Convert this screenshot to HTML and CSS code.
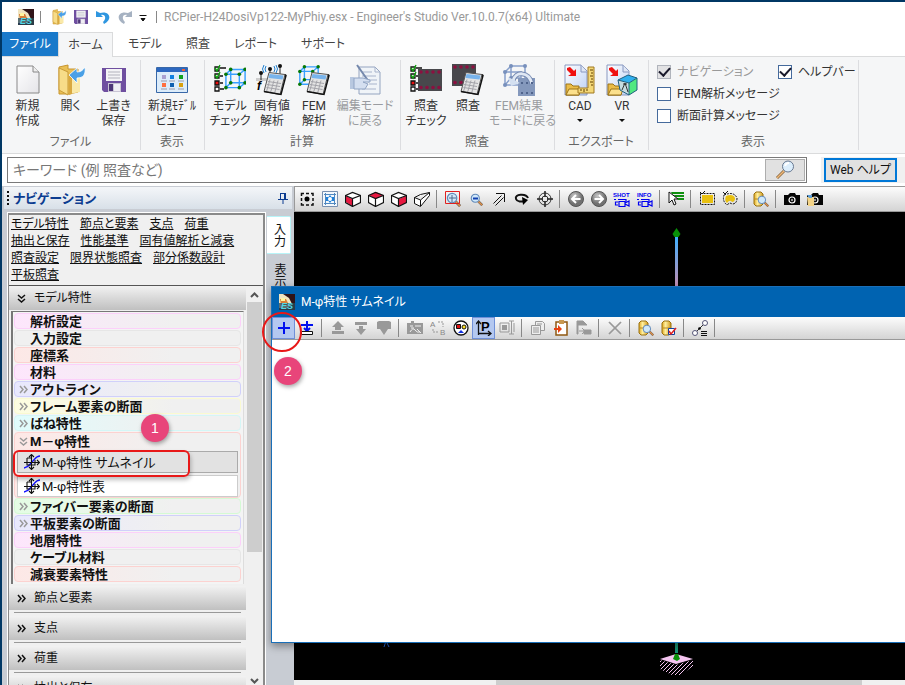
FILE: index.html
```html
<!DOCTYPE html>
<html lang="ja">
<head>
<meta charset="utf-8">
<title>Engineer's Studio</title>
<link rel="stylesheet" href="styles.css">
</head>
<body>
<svg class="defs" aria-hidden="true">
  <defs>
    <linearGradient id="gold" x1="0" x2="1"><stop offset="0" stop-color="#e0a820"/><stop offset=".4" stop-color="#fff0a0"/><stop offset="1" stop-color="#d09818"/></linearGradient>
    <linearGradient id="paper" x1="0" y1="0" x2="1" y2="1"><stop offset="0" stop-color="#fff"/><stop offset="1" stop-color="#e4e4e8"/></linearGradient>
    <linearGradient id="sheet" x1="0" y1="0" x2="1" y2="1"><stop offset="0" stop-color="#fff"/><stop offset="1" stop-color="#bcd0f4"/></linearGradient>
    <linearGradient id="beam" x1="0" y1="0" x2="0" y2="1"><stop offset="0" stop-color="#40b0ff"/><stop offset=".12" stop-color="#c48cb0"/><stop offset=".9" stop-color="#30a080"/><stop offset="1" stop-color="#109070"/></linearGradient>
    <radialGradient id="ball" cx=".4" cy=".3"><stop offset="0" stop-color="#c8c8c8"/><stop offset="1" stop-color="#707070"/></radialGradient>
    <pattern id="hatch" width="4" height="4" patternUnits="userSpaceOnUse"><path d="M0 4 4 0M-1 1 1-1M3 5 5 3" stroke="#f4c4f0" stroke-width="1"/></pattern>
  </defs>
  <symbol id="es" viewBox="0 0 16 16"><path fill="#301418" d="M0 0h16v16H0z"/><path fill="#f0e4c0" d="M0 0h4l6 4 3 6-4 4H0z"/><path fill="#d88038" d="M1 5h6l3 6H2z"/><path fill="#fff6a0" d="M2 4h4v3H2z"/><path fill="#284858" d="M0 9h16v7H0z" opacity=".75"/><text x="2" y="15" font-size="9" font-weight="700" font-style="italic" font-family="Liberation Sans" fill="#50d8e8">ES</text></symbol>
  <symbol id="open" viewBox="0 0 32 32"><path d="M4 3l9-2v4h10v23l-9 2H4z" fill="#eac055" stroke="#c89630"/><path d="M4 4l9 4v23l-9-5z" fill="#f7dc88" stroke="#c99b38"/><path d="M14 10h11v18l-11 2z" fill="#fae9a8"/><path d="M14 10h3v20l-3 1z" fill="#d9a940"/><path d="M14 11l8-7v4c4 0 6-2 8-5 1 8-2 11-8 11v5z" fill="#4aa0e6" stroke="#fff" stroke-width=".8"/></symbol>
  <symbol id="save" viewBox="0 0 24 24"><path d="M0 0h24v24H2l-2-2z" fill="#6f4fa0"/><path d="M4 1h16v12H4z" fill="#f4f4f6"/><path d="M6 4h12M6 7h12M6 10h12" stroke="#c8c8d0" stroke-width="1.5"/><path d="M6 15h13v9H6z" fill="#c9c4d4"/><path d="M7 16h4v7H7z" fill="#4e3778"/><path d="M12 16h6v7h-6z" fill="#f0eef4"/></symbol>
  <symbol id="cube" viewBox="0 0 24 24"><g fill="none" stroke="#38a0ff" stroke-width="1.5"><path d="M2 7h14v14H2zM7 2h15v14H7zM2 7l5-5M16 7l6-5M2 21l5-5M16 21l6-5"/></g><g fill="#067806"><circle cx="2" cy="7" r="1.900"/><circle cx="16" cy="7" r="1.900"/><circle cx="7" cy="2" r="1.900"/><circle cx="22" cy="2" r="1.900"/><circle cx="2" cy="21" r="1.900"/><circle cx="16" cy="21" r="1.900"/><circle cx="7" cy="16" r="1.900"/><circle cx="22" cy="16" r="1.900"/></g></symbol>
  <symbol id="calc" viewBox="0 0 24 24"><path d="M6 1l16 2-5 20-16-3z" fill="#e4e4e4" stroke="#555" stroke-width="1"/><path d="M6.500 2.500l14 1.500-1 4-14-1.500z" fill="#78b4ec"/><path d="M5 10l13 2M4 13l13 2M3.500 16l13 2M7 8L3.500 20M11 9L7.500 21M15 9l-3.500 13" stroke="#a4a4aa" stroke-width="1" fill="none"/><path d="M22 3l1 1-5 19-17-3" fill="none" stroke="#111" stroke-width="1.500"/></symbol>
  <symbol id="checks" viewBox="0 0 14 28"><g fill="#fff" stroke="#111" stroke-width="1.300"><path d="M1 3h4v4H1zM1 10h4v4H1zM1 23h4v4H1z" /><path fill="#e81010" d="M1 17h4v4H1z"/><path d="M6 4h6M6 12h3M6 19h3M6 25h4"/></g><path d="M1 4l2 3 3-6M1 11l2 3 3-6" fill="none" stroke="#10a010" stroke-width="1.400"/></symbol>
  <symbol id="slab" viewBox="0 0 24 22"><path d="M0 0h24v22H0z" fill="#48484c"/><g fill="#8c1040"><circle cx="3" cy="3" r="1.800"/><circle cx="9" cy="3" r="1.800"/><circle cx="15" cy="3" r="1.800"/><circle cx="21" cy="3" r="1.800"/><circle cx="3" cy="18.500" r="1.800"/><circle cx="9" cy="18.500" r="1.800"/><circle cx="15" cy="18.500" r="1.800"/><circle cx="21" cy="18.500" r="1.800"/></g></symbol>
  <symbol id="export" viewBox="0 0 32 32"><path d="M1 1h16l6 6v24H1z" fill="url(#sheet)" stroke="#8898c0"/><path d="M17 1v7h6" fill="#dfe6f4" stroke="#8898c0"/><path d="M3 4l3-1 4 4 2-2v7H4l3-2-4-4z" fill="#f01010"/><path d="M2 20h5l2 2h6v9H2z" fill="#eabc48" stroke="#9c7418"/><path d="M2 31l3-6h12l-2 6z" fill="#fbe08c" stroke="#9c7418"/></symbol>
  <symbol id="lens" viewBox="0 0 16 16"><path d="M10 10l5 5" stroke="#555" stroke-width="3"/><path d="M10 10l5 5" stroke="#e09048" stroke-width="1.800"/><circle cx="6.500" cy="6.500" r="5" fill="#cfe8fa" stroke="#6088b8" stroke-width="1.300"/></symbol>
  <symbol id="barrel" viewBox="0 0 16 16"><path d="M1 3l2-2h5l2 2v10l-2 2H3l-2-2z" fill="url(#gold)" stroke="#987010"/><path d="M2 8h7" stroke="#b88820"/></symbol>
  <symbol id="box" viewBox="0 0 16 16"><path d="M1 4l6-3 8 3v8l-7 3-7-3z" fill="#fff"/></symbol>
  <symbol id="edges" viewBox="0 0 16 16"><path d="M.5 4.500l7-3 8 3v7l-8 4-7-4zM.5 4.500l7 3 8-3M7.500 7.500v8" fill="none" stroke="#111" stroke-width="1.200"/></symbol>
  <symbol id="camera" viewBox="0 0 16 16"><path d="M0 4h4l2-2h5l1 2h4v10H0z" fill="#050505"/><circle cx="8" cy="9" r="3" fill="none" stroke="#fff" stroke-width="1.200"/><circle cx="8" cy="9" r="1.200" fill="#999"/></symbol>
  <symbol id="video" viewBox="0 0 18 18"><path d="M1 9.500h2M5 9.500h8v2M6 11.500h6v5H6zM5 12H2.500v3H5M12 13l4-2v5l-4-2" fill="none" stroke="#0000f0" stroke-width="1.200"/></symbol>
  <symbol id="phi" viewBox="0 0 16 16"><path d="M0 14c5-1 5-3 8-6s4-6 8-6" stroke="#1010ff" stroke-width="1.400" fill="none"/><path d="M0 8.500h15M7.500 1v14M5 3l2.500-2.500L10 3M5 13l2.500 2.500L10 13M13 6l2.500 2.500L13 11M3 4h5M3 4v7h5M11 6v5H8" stroke="#111" fill="none" stroke-width="1.100"/></symbol>
  <symbol id="more" viewBox="0 0 9 9"><path d="M1 1l3 3.500L1 8M5 1l3 3.500L5 8" fill="none" stroke="currentColor" stroke-width="1.500"/></symbol>
  <symbol id="less" viewBox="0 0 9 9"><path d="M1 1l3.500 3L8 1M1 5l3.500 3L8 5" fill="none" stroke="currentColor" stroke-width="1.500"/></symbol>
</svg>

<div class="app">
  <header class="titlebar">
    <svg class="i16"><use href="#es"/></svg>
    <span class="bar"></span>
    <button class="quick" aria-label="開く"><svg class="i16"><use href="#open"/></svg></button>
    <button class="quick" aria-label="保存"><svg class="i14"><use href="#save"/></svg></button>
    <button class="quick" aria-label="元に戻す"><svg class="i14" viewBox="0 0 14 14"><path d="M0 1v6h7L5 5c4-1 6 3 2 7l1 2c9-4 6-14-4-11z" fill="#2f96e0"/></svg></button>
    <button class="quick" aria-label="やり直し"><svg class="i14" viewBox="0 0 14 14"><path d="M14 1v6H7l2-2C5 4 3 8 7 12l-1 2C-3 10 0 0 10 3z" fill="#a6b2c2"/></svg></button>
    <button class="quick quick--menu" aria-label="カスタマイズ"><svg class="i10" viewBox="0 0 10 10"><path d="M1.500 3.500h7M3 6.500h4L5 9z" fill="#111" stroke="#111" /></svg></button>
    <span class="bar"></span>
    <h1>RCPier-H24DosiVp122-MyPhiy.esx - Engineer's Studio Ver.10.0.7(x64) Ultimate</h1>
  </header>

  <nav class="tabs">
    <button class="tab tab--file">ファイル</button>
    <button class="tab tab--on">ホーム</button>
    <button class="tab">モデル</button>
    <button class="tab">照査</button>
    <button class="tab">レポート</button>
    <button class="tab">サポート</button>
  </nav>

  <section class="ribbon">
    <div class="group group--file">
      <div class="tools">
        <button class="tool"><svg class="i32" viewBox="0 0 32 32"><path d="M5 2h16l6 6v21H5z" fill="url(#paper)" stroke="#888"/><path d="M21 2v6h6" fill="#eee" stroke="#888"/></svg>新規<br>作成</button>
        <button class="tool"><svg class="i32"><use href="#open"/></svg>開く</button>
        <button class="tool"><svg class="i32" viewBox="0 0 32 32"><use href="#save" x="4" y="4" width="24" height="24"/></svg>上書き<br>保存</button>
      </div>
      <div class="caption">ファイル</div>
    </div>
    <div class="group">
      <div class="tools">
        <button class="tool tool--mid"><svg class="i32" viewBox="0 0 32 32"><path d="M.5 3.500h31v25H.5z" fill="#dcecfa" stroke="#3868a8"/><path d="M1 4h30v4H1z" fill="#2c68c0"/><path d="M26 5h3v2h-3z" fill="#f06030"/><path d="M6 11h4v4H6z" fill="#a8a0d0"/><path d="M14 11h4v4h-4z" fill="#1080e0"/><path d="M23 11h4v4h-4z" fill="#10a020"/><path d="M6 19h4v4H6z" fill="#ff7040"/><path d="M14 19h4v4h-4z" fill="#1060b0"/><path d="M23 19h4v4h-4z" fill="#d8a010"/><path d="M5 17h6M13 17h6M22 17h6M5 25h6M13 25h6M22 25h6" stroke="#99a"/></svg>新規ﾓﾃﾞﾙ<br>ビュー</button>
      </div>
      <div class="caption">表示</div>
    </div>
    <div class="group">
      <div class="tools">
        <button class="tool"><svg class="i32" viewBox="0 0 32 32"><use href="#checks" y="0" width="14" height="28"/><use href="#cube" x="10" y="3" width="23" height="24"/></svg>モデル<br>チェック</button>
        <button class="tool"><svg class="i32" viewBox="0 0 32 32"><path d="M0 14h14v3H0z" fill="#ccc"/><path d="M5 10v6M14 6v9M24 3v8" stroke="#222"/><g fill="#111"><circle cx="5" cy="9" r="2"/><circle cx="14" cy="5" r="2"/><circle cx="24" cy="2" r="2"/></g><path d="M10 2q-2 3 0 6M8 1q-3 4 0 8M18 2q2 3 0 6M20 1q3 4 0 8" stroke="#2080d0" fill="none"/><use href="#calc" x="7" y="7" width="24" height="25"/><text x="1" y="26" font-size="12" font-style="italic" font-weight="700" font-family="Liberation Sans">f</text></svg>固有値<br>解析</button>
        <button class="tool"><svg class="i32" viewBox="0 0 32 32"><use href="#cube" x="0" y="0" width="22" height="24"/><use href="#calc" x="8" y="7" width="24" height="25"/></svg>FEM<br>解析</button>
        <button class="tool tool--wide" disabled><svg class="i32" viewBox="0 0 32 32"><path d="M10 3h16l5 5v22H10z" fill="#f0f4f8" stroke="#94a4c0"/><path d="M13 8h10M13 12h14M18 16h10M20 20h8M13 25h14M26 3v5h5" stroke="#a8b4cc" fill="none"/><path d="M8 1l12 17" stroke="#7488ac" stroke-width="2"/><path d="M1 13h4v12H1z" fill="#b8c8e0"/><path d="M5 14h9l7 2v2h-7l5 2-3 5H5z" fill="#d4dff0" stroke="#90a4c4"/></svg>編集モード<br>に戻る</button>
      </div>
      <div class="caption">計算</div>
    </div>
    <div class="group">
      <div class="tools">
        <button class="tool"><svg class="i32" viewBox="0 0 32 32"><use href="#checks" width="14" height="28"/><use href="#slab" x="8" y="5" width="24" height="22"/></svg>照査<br>チェック</button>
        <button class="tool"><svg class="i32" viewBox="0 0 32 32"><use href="#slab" width="24" height="22"/><use href="#calc" x="8" y="7" width="24" height="25"/></svg>照査</button>
        <button class="tool tool--wide" disabled><svg class="i32" viewBox="0 0 32 32"><path d="M2 8h16v13H2zM8 2h14v13M2 8l6-6v12M2 21l6-7h10" fill="none" stroke="#88a0cc" stroke-width="1.500"/><g fill="#7890bc"><circle cx="2" cy="8" r="2"/><circle cx="8" cy="2" r="2"/><circle cx="22" cy="2" r="2"/><circle cx="2" cy="21" r="2"/><circle cx="8" cy="14" r="2"/></g><path d="M15 14h17v18H15z" fill="#8498bc"/><path d="M10 17c2-10 16-10 19 3" fill="none" stroke="#7488b0" stroke-width="5"/><path d="M10 17c2-10 16-10 19 3" fill="none" stroke="#e0e8f4" stroke-width="3"/><path d="M5 13l3 9 9-3z" fill="#d4e0f0"/><path d="M18 19h2M23 19h2M28 19h2M18 29h2M23 29h2M28 29h2" stroke="#50648c" stroke-width="2"/></svg>FEM結果<br>モードに戻る</button>
      </div>
      <div class="caption">照査</div>
    </div>
    <div class="group">
      <div class="tools">
        <button class="tool"><svg class="i32" viewBox="0 0 32 32"><use href="#export" width="32" height="32"/><path d="M24 3h6v26H14v-5h10z" fill="#f4d878" stroke="#a07820"/><path d="M26 6h3M27 9h2M26 12h3M27 15h2M26 18h3M27 21h2M17 25v2M20 25v3M23 25v2" stroke="#604000"/></svg>CAD<span class="caret"></span></button>
        <button class="tool"><svg class="i32" viewBox="0 0 32 32"><use href="#export" width="32" height="32"/><path d="M12 16l10-5 9 3-8 5z" fill="#30b0f0"/><path d="M12 16l11 3v12l-9-5z" fill="#c8dce0"/><path d="M23 19l8-5v12l-8 5z" fill="#50e880"/><path d="M12 16l10-5 9 3v12l-8 5-9-5zM12 16l11 3v12M23 19l8-5" fill="none" stroke="#206080"/><path d="M16 26l3-7 3 9M17 20h4" stroke="#333" fill="none"/></svg>VR<span class="caret"></span></button>
      </div>
      <div class="caption">エクスポート</div>
    </div>
    <div class="group group--checks">
      <div class="checks">
        <label class="check check--off"><input type="checkbox" checked disabled>ナビゲーション</label>
        <label class="check"><input type="checkbox" checked>ヘルプバー</label>
        <label class="check"><input type="checkbox">FEM解析メッセージ</label>
        <span></span>
        <label class="check"><input type="checkbox">断面計算メッセージ</label>
      </div>
      <div class="caption">表示</div>
    </div>
  </section>

  <form class="search">
    <div class="search-box">
      <input type="text" aria-label="キーワード" placeholder="キーワード (例 照査など)">
      <button type="button" class="search-go" aria-label="検索"><svg class="i20" viewBox="0 0 20 20"><path d="M9 11l-7 7" stroke="#8a6840" stroke-width="3"/><path d="M9 11l-7 7" stroke="#f0b878" stroke-width="1.500"/><circle cx="13" cy="6.500" r="5.500" fill="#dceefc" stroke="#687890"/><path d="M10 6q1-3 4-3" stroke="#fff" stroke-width="2" fill="none"/></svg></button>
    </div>
    <div class="help"><button type="button">Web ヘルプ</button></div>
  </form>

  <main class="work">
    <aside class="nav">
      <div class="nav-head">
        <span class="grip"></span>
        <h2>ナビゲーション</h2>
        <svg class="pin" viewBox="0 0 10 12"><path d="M2.500 1v6M7.500 1v6M2 1.500h6M6.500 1v6M0 7.500h10M5 8v4" fill="none" stroke="#0c3c90"/></svg>
      </div>
      <div class="nav-body">
        <div class="panel">
          <div class="links">
            <div><a href="#">モデル特性</a><a href="#">節点と要素</a><a href="#">支点</a><a href="#">荷重</a></div>
            <div><a href="#">抽出と保存</a><a href="#">性能基準</a><a href="#">固有値解析と減衰</a></div>
            <div><a href="#">照査設定</a><a href="#">限界状態照査</a><a href="#">部分係数設計</a></div>
            <div><a href="#">平板照査</a></div>
          </div>
          <div class="scroller">
            <div class="sections">
              <button class="section"><svg class="i9"><use href="#less"/></svg>モデル特性</button>
              <ul class="tree">
                <li class="item pink"><span class="mark"></span>解析設定</li>
                <li class="item grey"><span class="mark"></span>入力設定</li>
                <li class="item red"><span class="mark"></span>座標系</li>
                <li class="item pink"><span class="mark"></span>材料</li>
                <li class="item blue"><svg class="mark"><use href="#more"/></svg>アウトライン</li>
                <li class="item yellow"><svg class="mark"><use href="#more"/></svg>フレーム要素の断面</li>
                <li class="item cyan"><svg class="mark"><use href="#more"/></svg>ばね特性<span class="badge badge--one">1</span></li>
                <li class="branch red">
                  <div class="item item--plain"><svg class="mark"><use href="#less"/></svg>M－φ特性</div>
                  <button class="leaf leaf--on"><svg class="i16"><use href="#phi"/></svg>M-φ特性 サムネイル<span class="outline"></span></button>
                  <button class="leaf"><svg class="i16"><use href="#phi"/></svg>M-φ特性表</button>
                </li>
                <li class="item green"><svg class="mark"><use href="#more"/></svg>ファイバー要素の断面</li>
                <li class="item blue"><svg class="mark"><use href="#more"/></svg>平板要素の断面</li>
                <li class="item pink"><span class="mark"></span>地層特性</li>
                <li class="item grey"><span class="mark"></span>ケーブル材料</li>
                <li class="item red"><span class="mark"></span>減衰要素特性</li>
              </ul>
              <button class="section section--more"><svg class="i9"><use href="#more"/></svg>節点と要素</button>
              <button class="section section--more"><svg class="i9"><use href="#more"/></svg>支点</button>
              <button class="section section--more"><svg class="i9"><use href="#more"/></svg>荷重</button>
              <button class="section section--more"><svg class="i9"><use href="#more"/></svg>抽出と保存</button>
            </div>
            <div class="track">
              <svg class="i9" viewBox="0 0 9 9"><path d="M1 6l3.500-3.500L8 6" fill="none" stroke="#555" stroke-width="2"/></svg>
              <span class="thumb"></span>
              <svg class="i9" viewBox="0 0 9 9"><path d="M1 3l3.500 3.500L8 3" fill="none" stroke="#555" stroke-width="2"/></svg>
            </div>
          </div>
        </div>
        <div class="sides">
          <button class="side side--on">入力</button>
          <button class="side">表示</button>
        </div>
      </div>
    </aside>

    <section class="model">
      <div class="toolbar">
        <button aria-label="中心"><svg class="i16" viewBox="0 0 16 16"><path d="M2.500 5V2.500H5M7 2.500h3M12 2.500h2V5M2.500 7v3M14 7v3M2.500 12v2H5M7 14h3M12 14h2v-2" fill="none" stroke="#111" stroke-width="1.500"/><circle cx="8" cy="8" r="2.500"/></svg></button>
        <button aria-label="全体表示"><svg class="i16" viewBox="0 0 16 16"><path d="M.5.5h15v15H.5z" fill="#f4f8fc" stroke="#7890b0"/><path d="M3.500 2v12M12.500 2v12M2 3.500h12M2 12.500h12" stroke="#5088c0"/><path d="M8 4l1.500 2H12v4h-2.500L8 12l-1.500-2H4V6h2.500z" fill="#2080d8"/><circle cx="8" cy="8" r="2" fill="#fff"/></svg></button>
        <button aria-label="前面"><svg class="i16"><use href="#box"/><path d="M1 5l6 3v7l-6-4z" fill="#e81840"/><use href="#edges"/></svg></button>
        <button aria-label="上面"><svg class="i16"><use href="#box"/><path d="M1 4l7-3 7 3-7 4z" fill="#e81840"/><use href="#edges"/></svg></button>
        <button aria-label="側面"><svg class="i16"><use href="#box"/><path d="M8 8l7-3v7l-7 3z" fill="#e81840"/><use href="#edges"/></svg></button>
        <button aria-label="斜め"><svg class="i16" viewBox="0 0 16 16"><path d="M.5 6.500l6-3 9-2v3l-9 11-6-3zM.5 6.500l6 2.500 9-7.500M6.500 9v6" fill="#fff" stroke="#111"/></svg></button>
        <span class="sep"></span>
        <button aria-label="範囲拡大"><svg class="i16" viewBox="0 0 16 16"><use href="#lens" x="1" y="1" width="15" height="15"/><path d="M4 7h7M7 4v7" stroke="#506888"/><path d="M.5.500h14v12H.5z" fill="none" stroke="#e02020"/></svg></button>
        <button aria-label="縮小"><svg class="i16" viewBox="0 0 16 16"><use href="#lens" x="2" y="2" width="13" height="13"/><path d="M5 7.500h5" stroke="#1040b0" stroke-width="2"/></svg></button>
        <button aria-label="移動"><svg class="i16" viewBox="0 0 16 16"><path d="M2.500 12.500l8-8M4.500 14.500l8-8M5 2.500h8.500V11" fill="none" stroke="#111" stroke-width="1"/></svg></button>
        <button aria-label="回転"><svg class="i16" viewBox="0 0 16 16"><path d="M14 7C12 2 0 3 2 8c1 3 6 3 8 2" fill="none" stroke="#111" stroke-width="2"/><path d="M8 6l6 3-5 5z"/></svg></button>
        <button aria-label="注視点"><svg class="i16" viewBox="0 0 16 16"><circle cx="8" cy="8" r="6" fill="none" stroke="#333"/><circle cx="8" cy="8" r="3" fill="none" stroke="#333"/><path d="M8 0v6M8 10v6M0 8h6M10 8h6" stroke="#222" stroke-width="1.500"/></svg></button>
        <span class="sep"></span>
        <button aria-label="戻る"><svg class="i16" viewBox="0 0 16 16"><circle cx="8" cy="8" r="7.500" fill="url(#ball)" stroke="#555"/><path d="M12.500 8H4M8 4L4 8l4 4" stroke="#fff" stroke-width="2" fill="none"/></svg></button>
        <button aria-label="進む"><svg class="i16" viewBox="0 0 16 16"><circle cx="8" cy="8" r="7.500" fill="url(#ball)" stroke="#555"/><path d="M3.500 8H12M8 4l4 4-4 4" stroke="#fff" stroke-width="2" fill="none"/></svg></button>
        <button aria-label="撮影"><svg class="i18" viewBox="0 0 18 18"><text x="0" y="7" font-size="6" font-weight="700" font-family="Liberation Sans" fill="#0000f0">SHOT</text><use href="#video"/></svg></button>
        <button aria-label="情報"><svg class="i18" viewBox="0 0 18 18"><text x="1" y="7" font-size="6" font-weight="700" font-family="Liberation Sans" fill="#0000f0">INFO</text><use href="#video"/></svg></button>
        <span class="sep"></span>
        <button aria-label="選択"><svg class="i16" viewBox="0 0 16 16"><path d="M3 1h13v2H4zM6 4h10v2H7zM9 7h7v2h-6z" fill="#109010"/><path d="M1 1v11l3-3 2 5 2-1-2-5h4z" fill="#fff" stroke="#111"/></svg></button>
        <span class="sep"></span>
        <button aria-label="矩形選択"><svg class="i16" viewBox="0 0 16 16"><path d="M3 4h11v8H3z" fill="#e8c010"/><path d="M1.500 2.500h14v11h-14z" fill="none" stroke="#111" stroke-dasharray="2 1"/><path d="M1 1l2 2 3-3" stroke="#111" fill="none"/></svg></button>
        <button aria-label="自由選択"><svg class="i16" viewBox="0 0 16 16"><path d="M4 5q7-3 9 2 0 4-3 4-2-3-5 1-3-2-1-7z" fill="#e8c010"/><path d="M2 4q10-4 13 3 0 6-5 6-2-2-5 1-5-4-3-10z" fill="none" stroke="#111" stroke-dasharray="2 1"/><path d="M1 1l2 2 3-3" stroke="#111" fill="none"/></svg></button>
        <span class="sep"></span>
        <button aria-label="検索"><svg class="i16" viewBox="0 0 16 16"><use href="#barrel"/><use href="#lens" x="4" y="4" width="12" height="12"/></svg></button>
        <span class="sep"></span>
        <button aria-label="カメラ"><svg class="i16"><use href="#camera"/></svg></button>
        <button aria-label="画像コピー"><svg class="i16" viewBox="0 0 16 16"><use href="#camera"/><path d="M0 6h7v9H1z" fill="#f4d488"/><path d="M0 4h5v3H2z" fill="#60a0d8"/></svg></button>
      </div>
      <svg class="canvas" viewBox="0 0 611 469" preserveAspectRatio="xMinYMin slice"><path d="M381 25h3v416h-3z" fill="url(#beam)"/><path d="M382.500 16l4 6-2 3h-4l-2-3z" fill="#089008"/><path d="M366 447l16-5 17 5-17 5z" fill="#f4c4f0"/><path d="M366 448l16 5 17-5v6l-12 9h-9l-12-6z" fill="url(#hatch)"/><path d="M379 447l2-5h3l2 5-3 2z" fill="#089008"/><path d="M90 435l2-6 3 6" stroke="#2060d0" fill="none"/></svg>
      <div class="hscroll"><span></span></div>
    </section>
  </main>

  <section class="dialog" role="dialog" aria-label="M-φ特性 サムネイル">
    <header><svg class="i16"><use href="#es"/></svg><h2>M-φ特性 サムネイル</h2></header>
    <div class="toolbar toolbar--dialog">
      <button class="on" aria-label="追加"><svg class="i16" viewBox="0 0 16 16"><path d="M8 2v12M2 8h12" stroke="#0010f0" stroke-width="2"/></svg><span class="ring"></span><span class="badge badge--two">2</span></button>
      <button aria-label="挿入"><svg class="i16" viewBox="0 0 16 16"><path d="M8 1v9M2 5h12M5 8l3 3 3-3" stroke="#0010f0" stroke-width="2" fill="none"/><path d="M2.500 11.500h11v3h-11z" stroke="#111" fill="#fff"/></svg></button>
      <span class="sep"></span>
      <button disabled aria-label="上へ"><svg class="i16" viewBox="0 0 16 16"><path d="M8 1l6 6h-3v3H5V7H2zM2 11h12v3H2z" fill="#999"/></svg></button>
      <button disabled aria-label="下へ"><svg class="i16" viewBox="0 0 16 16"><path d="M2 2h12v3H2zM6 6h4v3h3l-5 6-5-6h3z" fill="#999"/></svg></button>
      <button disabled aria-label="最下部へ"><svg class="i16" viewBox="0 0 16 16"><path d="M1 2l2-1h10l2 1v7h-3l-4 6-4-6H1z" fill="#999"/></svg></button>
      <span class="sep"></span>
      <button disabled aria-label="編集"><svg class="i16" viewBox="0 0 16 16"><path d="M0 3h4V1h3v2h9v11H0z" fill="#999"/><path d="M3 6h3M8 6h6M3 12q3-5 5-2t5 2M4 8h3M10 9l4 4" stroke="#eee" fill="none"/></svg></button>
      <button disabled aria-label="置換"><svg class="i16" viewBox="0 0 16 16"><text x="0" y="7" font-size="8" font-family="Liberation Sans" fill="#888">A</text><text x="10" y="15" font-size="8" font-family="Liberation Sans" fill="#888">B</text><path d="M3 9v3h6M8 2h5v5" fill="none" stroke="#999" stroke-dasharray="2 1"/></svg></button>
      <button aria-label="図形"><svg class="i16" viewBox="0 0 16 16"><circle cx="8" cy="8" r="7" fill="#fff" stroke="#111" stroke-width="1.300"/><path d="M3.500 4.500h4v4h-4z" fill="#e01010" stroke="#111"/><circle cx="11" cy="7" r="2" fill="#ffe020" stroke="#111"/><path d="M5 13l3-3 3 3z" fill="#1030e0"/></svg></button>
      <button class="on" aria-label="プロット"><svg class="i16" viewBox="0 0 16 16"><path d="M2.500 15V1M0 4l2.500-3L5 4M2 13.500h13M12 11l3 2.500-3 2.500" fill="none" stroke="#111" stroke-width="1.300"/><text x="5" y="11" font-size="13" font-weight="700" font-family="Liberation Sans">P</text></svg></button>
      <button disabled aria-label="列"><svg class="i16" viewBox="0 0 16 16"><path d="M1 3h9v9H1z" fill="none" stroke="#999"/><path d="M3 5h5v5H3z" fill="#999"/><path d="M10 1h5M12.500 1v13M10 14h5M15 3v9" stroke="#999" fill="none"/></svg></button>
      <span class="sep"></span>
      <button disabled aria-label="コピー"><svg class="i16" viewBox="0 0 16 16"><path d="M5.500 1.500h7l2 2v7h-9z" fill="#eee" stroke="#999"/><path d="M1.500 5.500h9v9h-9zM3 8h6M3 10h6M3 12h6M7 4h5" fill="#eee" stroke="#999"/></svg></button>
      <button aria-label="貼り付け"><svg class="i16" viewBox="0 0 16 16"><path d="M3 2h11v13H3z" fill="#fff" stroke="#905810" stroke-width="1.500"/><path d="M6 0h5v4H6z" fill="#c89850"/><path d="M1 8h4V5l4 4-4 4v-3H1z" fill="#e84010"/></svg></button>
      <button disabled aria-label="書き出し"><svg class="i16" viewBox="0 0 16 16"><path d="M1 1h6l4 4H1zM1 5h1v9H1zM8 10h7v4H8z" fill="#999" stroke="#999"/><path d="M3 11h5M6 8l3 3-3 3" stroke="#999" fill="none"/></svg></button>
      <span class="sep"></span>
      <button disabled aria-label="削除"><svg class="i16" viewBox="0 0 16 16"><path d="M2 2l12 12" stroke="#999" stroke-width="1.700"/><path d="M14 2L2 14" stroke="#999" stroke-width="1.700"/></svg></button>
      <span class="sep"></span>
      <button aria-label="データ検索"><svg class="i16" viewBox="0 0 16 16"><use href="#barrel"/><use href="#lens" x="4" y="4" width="12" height="12"/></svg></button>
      <button aria-label="データ確認"><svg class="i16" viewBox="0 0 16 16"><use href="#barrel"/><path d="M7.500 8.500h6v6h-6z" fill="#fff" stroke="#1040a0"/><path d="M8 11l2 3 5-6" stroke="#e02020" stroke-width="1.500" fill="none"/></svg></button>
      <span class="sep"></span>
      <button aria-label="節点"><svg class="i16" viewBox="0 0 16 16"><path d="M4 12l8-8" stroke="#333"/><circle cx="3" cy="13" r="2.500" fill="#fff" stroke="#557"/><circle cx="13" cy="3" r="2.500" fill="#fff" stroke="#557"/><circle cx="7.500" cy="8.500" r="1.300"/><path d="M9 11.500h6M9 13.500h6M9 15.500h6" stroke="#111"/></svg></button>
      <span class="sep"></span>
    </div>
    <div class="dialog-body"></div>
  </section>
</div>
</body>
</html>
```
FILE: styles.css
```css
* { box-sizing: border-box; }

body {
  margin: 0;
  font: 12px/15px Roboto, "Noto Sans CJK JP", sans-serif;
  font-feature-settings: "palt";
  color: #333;
}

button, input { font: inherit; color: inherit; }
button { margin: 0; padding: 0; border: 0; background: none; font-feature-settings: inherit; }
h1, h2, ul { margin: 0; padding: 0; font-size: 12px; font-weight: 400; list-style: none; }
svg { display: block; flex: none; }

.defs { position: absolute; width: 0; height: 0; }
.i9 { width: 9px; height: 9px; }
.i10 { width: 10px; height: 10px; }
.i14 { width: 14px; height: 14px; }
.i16 { width: 16px; height: 16px; }
.i18 { width: 18px; height: 18px; }
.i20 { width: 24px; height: 20px; }
.i32 { width: 32px; height: 32px; }

.app {
  position: relative;
  display: flex;
  flex-direction: column;
  height: 100vh;
  overflow: hidden;
  border: solid #003764;
  border-width: 2px 0 0 2px;
  background: #fff;
}

/* Title bar */
.titlebar { display: flex; align-items: center; height: 30px; padding-left: 16px; flex: none; }
.titlebar h1 { color: #999; white-space: nowrap; }
.bar { width: 1px; height: 12px; margin: 0 7px 0 6px; background: #888; }
.quick { display: grid; place-items: center; width: 22px; height: 22px; }
.quick--menu { width: 14px; }

/* Tabs */
.tabs { display: flex; height: 24px; flex: none; }
.tab { padding: 0 12px; color: #444; }
.tab--file { width: 56px; padding: 0; background: #1979ca; color: #fff; }
.tab--on { width: 55px; padding: 0; height: 25px; margin-right: 3px; border: 1px solid #dadbdc; border-bottom: 0; background: #f5f6f7; position: relative; }

/* Ribbon */
.ribbon { display: flex; height: 98px; flex: none; padding: 3px 0; border: solid #dadbdc; border-width: 1px 0; background: #f5f6f7; }
.group { display: flex; flex-direction: column; justify-content: space-between; padding: 4px 5px 0 4px; border-right: 1px solid #dcdde0; }
.tools { display: flex; }
.tool { align-self: flex-start; width: 42px; white-space: nowrap; text-align: center; }
.tool svg { margin: 0 auto 3px; }
.tool:disabled { color: #9a9ca0; }
.group--file .tool { width: 43px; }
.tool--mid { width: 54px; }
.tool--wide { width: 60px; }
.caret { display: block; width: 0; margin: 5px auto 0; border: 3px solid transparent; border-top-color: #111; border-bottom: 0; }
.caption { text-align: center; color: #666; }
.group--checks { width: 210px; }
.checks { display: grid; grid-template-columns: 121px auto; grid-auto-rows: 22px; align-items: center; margin: -3px 0 0 4px; }
.check { display: flex; align-items: center; gap: 6px; white-space: nowrap; }
.check--off { color: #999; }
.check input { appearance: none; width: 14px; height: 14px; margin: 0; border: 1px solid #456a9c; background: #fff; display: grid; place-items: center; flex: none; }
.check input:checked::after { content: ""; width: 9px; height: 5px; margin-top: -3px; border: solid #1a1a2c; border-width: 0 0 2px 2px; transform: rotate(-48deg); }
.check input:disabled { border-color: #b0b4bc; background: #e2e2e4; }

/* Keyword search */
.search { display: flex; align-items: center; height: 32px; flex: none; padding-left: 5px; gap: 14px; }
.search-box { display: flex; flex: 1; height: 26px; border: 1px solid #7a7a7a; }
.search-box input { flex: 1; min-width: 0; padding: 0 5px; border: 0; outline: 0; font-size: 14px; font-feature-settings: inherit; }
.search-box input::placeholder { color: #777; opacity: 1; }
.search-go { display: grid; place-items: center; width: 40px; margin: 1px; border: 1px solid #adadad; background: #e1e1e1; }
.help { padding: 0 8px 0 3px; background: #f0f0f0; }
.help button { display: block; width: 73px; height: 24px; margin: 1px 0; border: 2px solid #0078d7; background: #e1e1e1; color: #111; white-space: nowrap; }

/* Workspace */
.work { display: flex; flex: 1; min-height: 0; background: #c8ccd3; color: #111; }
.nav { display: flex; flex-direction: column; width: 292px; flex: none; }
.nav-head { display: flex; align-items: center; height: 22px; flex: none; margin: 1px 2px 4px; padding: 0 4px 0 3px; gap: 4px; background: linear-gradient(#f4f6f9, #d8e0e8); }
.nav-head h2 { flex: 1; color: #0c3c90; font-size: 13px; font-weight: 700; }
.grip { width: 2px; height: 14px; background: repeating-linear-gradient(#111 0 2px, transparent 2px 4px); }
.pin { width: 10px; height: 12px; }
.nav-body { display: flex; flex: 1; min-height: 0; }
.panel { display: flex; flex-direction: column; width: 257px; margin-left: 6px; border: solid #8a8a8a; border-width: 2px 2px 0 1px; background: #f0f0f0; outline: 1px solid #fff; }
.links { padding: 1px 2px 0; height: 70px; line-height: 17px; flex: none; white-space: nowrap; }
.links div { display: flex; gap: 11px; }
.links a { color: #111; text-decoration: underline; }
.scroller { display: flex; flex: 1; min-height: 0; border-top: 1px solid #555; }
.sections { flex: 1; min-width: 0; overflow: hidden; }
.section { display: flex; align-items: center; gap: 8px; width: 100%; height: 24px; padding-left: 8px; background: linear-gradient(#f2f2f2, #c0c0c0); }
.section--more { position: relative; margin-top: 2px; }
.section--more + .section--more { margin-top: 6px; }
.section--more + .section--more::before { content: ""; position: absolute; top: -4px; left: 5px; right: 5px; height: 1px; background: #999; }
.tree { margin: 1px 2px 0; padding: 1px 2px 1px 1px; border: solid #777; border-width: 1px 1px 0 2px; border-right-color: #ddd; background: #f4f4f4; font-size: 13px; font-weight: 700; color: #111; }
.item { display: flex; align-items: center; gap: 2px; height: 16px; margin-bottom: 1px; padding-left: 4px; border: 1px solid; border-radius: 4px; white-space: nowrap; position: relative; }
.item--plain { border: 0; }
.mark { width: 9px; height: 9px; color: #999; flex: none; }
.branch { border: 1px solid; border-radius: 4px; }
.pink { border-color: #fcd0fa; background: linear-gradient(90deg, #fde6fc, #f0f0f0 70%); }
.grey { border-color: #e6e6e6; background: #f0f0f0; }
.red { border-color: #fcd2d0; background: linear-gradient(90deg, #fde8e6, #f0f0f0 70%); }
.blue { border-color: #d0d0fa; background: linear-gradient(90deg, #e8e8fd, #f0f0f0 70%); }
.yellow { border-color: #fafad0; background: linear-gradient(90deg, #fdfde0, #f0f0f0 70%); }
.cyan { border-color: #d4f6f6; background: linear-gradient(90deg, #e0fcfc, #f0f0f0 70%); }
.green { border-color: #d4fad4; background: linear-gradient(90deg, #e4fde4, #f0f0f0 70%); }
.leaf { position: relative; display: flex; align-items: center; gap: 2px; width: calc(100% - 4px); height: 22px; margin: 2px 2px 0; padding-left: 6px; border: 1px solid #ccc; background: #fff; color: #111; font-weight: 400; }
.leaf--on { background: #e2e2e2; border-color: #aaa; }
.outline { position: absolute; z-index: 2; left: -5px; top: -2px; width: 177px; height: 27px; border: 2px solid #e81818; border-radius: 6px; box-shadow: 1px 3px 4px rgba(0, 0, 0, .25); }
.track { display: flex; flex-direction: column; align-items: center; width: 17px; padding: 5px 1px 0 0; background: #f0f0f0; flex: none; }
.track .thumb { width: 15px; height: 250px; margin: 2px 0 auto; background: #cdcdcd; }
.sides { display: flex; flex-direction: column; gap: 2px; padding: 3px 0 0 2px; }
.side { display: grid; place-items: center; width: 24px; height: 38px; writing-mode: vertical-rl; font-size: 12px; line-height: 14px; color: #111; font-feature-settings: normal; }
.side--on { background: #fff; border: solid #b8f4f8; border-width: 1px 1px 1px 0; border-radius: 0 2px 2px 0; }

.model { display: flex; flex-direction: column; flex: 1; min-width: 0; }
.toolbar { display: flex; align-items: center; height: 26px; flex: none; border: solid #999; border-width: 1px 0 1px 1px; background: linear-gradient(#fcfcfc, #d4d4d4); }
.toolbar button { position: relative; display: grid; place-items: center; width: 23px; height: 22px; flex: none; }
.sep { width: 1px; height: 18px; margin: 0 4px 0 3px; background: #888; flex: none; }
.canvas { flex: 1; min-height: 0; width: 100%; background: #000; }
.hscroll { height: 5px; flex: none; background: #f0f0f0; }
.hscroll span { display: block; width: 60%; height: 100%; margin-left: 33%; background: #cdcdcd; }

/* Thumbnail window over the model view */
.dialog { position: absolute; left: 269px; right: 0; top: 284px; bottom: 42px; display: flex; flex-direction: column; border: 1px solid #1a6fb8; border-right: 0; box-shadow: 0 3px 8px rgba(0, 0, 0, .4); background: #fff; color: #111; }
.dialog header { display: flex; align-items: center; gap: 6px; height: 30px; flex: none; padding-left: 7px; background: #0063b1; color: #fff; }
.toolbar--dialog { height: 23px; border-width: 0 0 1px; }
.toolbar--dialog .on { border: 1px solid #7090d8; background: #b4c8f0; }
.dialog-body { flex: 1; }
.ring { position: absolute; z-index: 2; left: -11px; top: -6px; width: 40px; height: 40px; border: 2px solid #e81818; border-radius: 50%; }
.badge { position: absolute; z-index: 3; display: grid; place-items: center; width: 28px; height: 28px; border-radius: 50%; background: #e8457a; box-shadow: 1px 2px 4px rgba(0, 0, 0, .35); color: #fff; font: 14px/16px "Liberation Sans", sans-serif; }
.badge--one { left: 126px; top: -2px; }
.badge--two { left: 1px; top: 39px; }
```
